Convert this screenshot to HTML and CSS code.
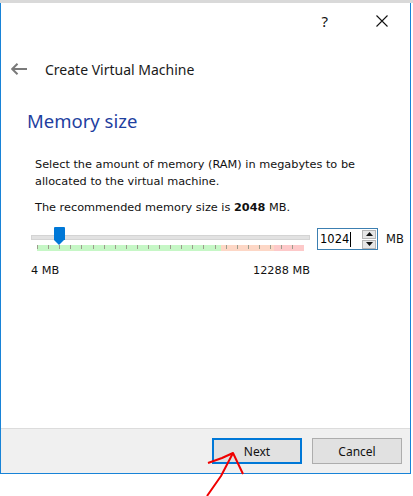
FILE: index.html
```html
<!DOCTYPE html>
<html lang="en">
<head>
  <meta charset="UTF-8">
  <title>Create Virtual Machine</title>
  <link rel="stylesheet" href="styles.css">
</head>
<body>
<div class="topstrip"></div>
<div class="window">
  <div class="titlebar">
    <span class="help">?</span>
    <svg class="close" width="12" height="12" viewBox="0 0 12 12">
      <path d="M0.5 0.5 L11.5 11.5 M11.5 0.5 L0.5 11.5" stroke="#111" stroke-width="1.1" fill="none"/>
    </svg>
  </div>

  <div class="header">
    <svg class="back" width="16" height="12" viewBox="0 0 16 12">
      <path d="M1 6 H16 M6.5 0.8 L1.2 6 L6.5 11.2" stroke="#7a7a7a" stroke-width="2" fill="none"/>
    </svg>
    <span class="wizard-title">Create Virtual Machine</span>
  </div>

  <div class="content">
    <h1>Memory size</h1>
    <p class="desc">Select the amount of memory (RAM) in megabytes to be allocated to the virtual machine.</p>
    <p class="recommend">The recommended memory size is <b>2048</b> MB.</p>

    <div class="memory-row">
      <div class="slider-block">
        <div class="track">
          <div class="thumb"></div>
        </div>
        <div class="scale">
          <div class="zone green"></div>
          <div class="zone orange"></div>
          <div class="zone red"></div>
        </div>
        <div class="scale-labels">
          <span>4 MB</span>
          <span>12288 MB</span>
        </div>
      </div>
      <div class="spinbox">
        <span class="value">1024<i class="caret"></i></span>
        <div class="spin-buttons">
          <div class="spin-btn">
            <svg width="7" height="4" viewBox="0 0 7 4"><path d="M0 4 L3.5 0 L7 4 Z" fill="#111"/></svg>
          </div>
          <div class="spin-btn">
            <svg width="7" height="4" viewBox="0 0 7 4"><path d="M0 0 L3.5 4 L7 0 Z" fill="#111"/></svg>
          </div>
        </div>
      </div>
      <span class="unit">MB</span>
    </div>
  </div>

  <div class="footer">
    <button class="btn default">Next</button>
    <button class="btn">Cancel</button>
  </div>
</div>

<svg class="scribble" width="413" height="496" viewBox="0 0 413 496">
  <path d="M207 496 L221 476 L233 453 M208 463 L222 458 L233 453 L243 474" stroke="#f00000" stroke-width="2" fill="none" stroke-linejoin="round"/>
</svg>

<script>
  // tick marks across the colour scale
  const scale = document.querySelector(".scale");
  for (let x = 0; x <= 266; x += 11.1) {
    const tick = document.createElement("div");
    tick.className = "tick";
    tick.style.left = Math.round(x) + "px";
    scale.appendChild(tick);
  }
</script>
</body>
</html>
```

FILE: styles.css
```css
body {
  margin: 0;
  background-color: #ffffff;
  font-family: 'DejaVu Sans', sans-serif;
  position: relative;
  width: 413px;
  height: 496px;
  overflow: hidden;
}

.topstrip {
  height: 3px;
  background-color: #d9d9d9;
}

.window {
  width: 409px;
  height: 470px;
  border: 1px solid #1883d7;
  border-top: none;
  display: flex;
  flex-direction: column;
  background-color: #ffffff;
}

.titlebar {
  height: 37px;
  display: flex;
  align-items: center;
  justify-content: flex-end;
  gap: 48px;
  padding-right: 22px;
  flex-shrink: 0;
}

.help {
  font-family: 'Noto Sans', sans-serif;
  font-size: 15px;
  color: #111;
  margin-top: -2px;
}

.close {
  margin-top: -1px;
}

.header {
  height: 30px;
  display: flex;
  align-items: center;
  padding-left: 10px;
  margin-top: 14px;
  flex-shrink: 0;
}

.back {
  margin-right: 18px;
}

.wizard-title {
  font-family: 'Noto Sans', sans-serif;
  font-size: 14px;
  color: #1a1a1a;
}

.content {
  flex: 1;
  padding-left: 26px;
  padding-right: 20px;
}

h1 {
  font-family: 'Noto Sans', sans-serif;
  font-weight: normal;
  font-size: 18.5px;
  color: #1f3f9f;
  margin: 24px 0 0 0;
}

.desc {
  font-size: 11.3px;
  line-height: 17px;
  color: #111;
  margin: 23px 0 0 8px;
}

.recommend {
  font-size: 11.3px;
  color: #111;
  margin: 11px 0 0 8px;
}

.memory-row {
  display: flex;
  align-items: flex-start;
  margin-top: 14px;
  margin-left: 4px;
}

.slider-block {
  width: 279px;
  flex-shrink: 0;
}

.track {
  position: relative;
  height: 3px;
  background-color: #e2e2e2;
  border: 1px solid #d4d4d4;
  margin-top: 7px;
}

.thumb {
  position: absolute;
  left: 22px;
  top: -9px;
  width: 11px;
  height: 13px;
  background-color: #0078d7;
  border-radius: 1px 1px 0 0;
}

.thumb::after {
  content: "";
  position: absolute;
  left: 0;
  top: 13px;
  border-left: 5.5px solid transparent;
  border-right: 5.5px solid transparent;
  border-top: 5px solid #0078d7;
}

.scale {
  position: relative;
  display: flex;
  height: 6px;
  margin: 5px 0 0 6px;
  width: 267px;
}

.zone {
  height: 6px;
}

.green {
  width: 184px;
  background-color: #c6f7c6;
}

.orange {
  width: 53px;
  background-color: #fdd7c6;
}

.red {
  width: 30px;
  background-color: #fdc9c9;
}

.tick {
  position: absolute;
  top: 0;
  width: 1px;
  height: 4px;
  background-color: #9c9c8c;
}

.scale-labels {
  display: flex;
  justify-content: space-between;
  font-size: 11.3px;
  color: #111;
  margin-top: 13px;
}

.spinbox {
  width: 57px;
  height: 20px;
  border: 1px solid #3c7fb1;
  margin-left: 7px;
  display: flex;
  align-items: center;
  justify-content: space-between;
  padding-left: 2px;
  box-sizing: content-box;
  margin-top: 0;
  flex-shrink: 0;
}

.value {
  font-size: 11.5px;
  color: #000;
  display: flex;
  align-items: center;
}

.caret {
  display: inline-block;
  width: 1px;
  height: 15px;
  background-color: #000;
  margin-left: 1px;
}

.spin-buttons {
  display: flex;
  flex-direction: column;
  gap: 1px;
  margin-right: 1px;
}

.spin-btn {
  width: 12px;
  height: 7px;
  background-color: #e6e6e6;
  border: 1px solid #b5b5b5;
  display: flex;
  align-items: center;
  justify-content: center;
  box-sizing: content-box;
}

.unit {
  font-size: 11.5px;
  color: #111;
  margin-left: 8px;
  margin-top: 4px;
}

.footer {
  height: 44px;
  border-top: 1px solid #dcdcdc;
  background-color: #f0f0f0;
  display: flex;
  align-items: center;
  justify-content: flex-end;
  gap: 10px;
  padding-right: 8px;
  flex-shrink: 0;
}

.btn {
  width: 90px;
  height: 26px;
  background-color: #e1e1e1;
  border: 1px solid #adadad;
  font-family: 'Noto Sans', sans-serif;
  font-size: 12px;
  color: #111;
  padding: 0;
}

.btn.default {
  border: 2px solid #0078d7;
}

.scribble {
  position: absolute;
  left: 0;
  top: 0;
  pointer-events: none;
}
```
